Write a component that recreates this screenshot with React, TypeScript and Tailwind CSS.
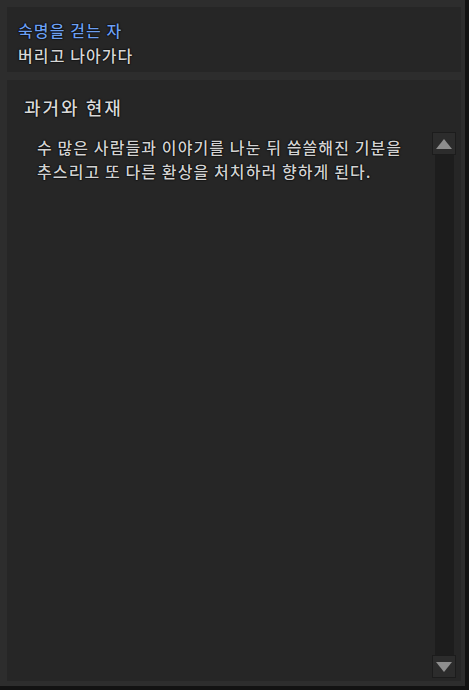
export default function App() {
  const font = { fontFamily: '"Noto Sans CJK KR", "Noto Sans", sans-serif' };

  return (
    <div
      className="w-[469px] h-[690px] bg-[#2d2d2d] border-r-4 border-b-4 border-[#121212] pt-[7px] pl-[7px] pr-[4px] pb-[5px] flex flex-col gap-[8px] [text-shadow:0_0_2px_#000,0_0_1px_#000,0_0_1px_#000]"
      style={font}
    >
      {/* Header */}
      <div className="h-[65px] bg-[#262626] pl-[11px] pt-[11px] shrink-0 font-medium tracking-[1.1px]">
        <div className="text-[16px] leading-[25px] text-[#6d9ff0]">숙명을 걷는 자</div>
        <div className="text-[16px] leading-[25px] text-[#d6d6d6]">버리고 나아가다</div>
      </div>

      {/* Content */}
      <div className="flex-1 bg-[#262626] flex flex-col min-h-0">
        <div className="h-[52px] pl-[17px] pt-[14px] text-[18px] leading-[26px] text-[#d8d8d8] font-medium tracking-[2px] shrink-0">
          과거와 현재
        </div>
        <div className="flex-1 flex min-h-0">
          <div className="flex-1 pl-[30px] pt-[3px] text-[16px] leading-[24px] text-[#d2d2d2] font-medium tracking-[1.1px] whitespace-nowrap">
            수 많은 사람들과 이야기를 나눈 뒤 씁쓸해진 기분을
            <br />
            추스리고 또 다른 환상을 처치하러 향하게 된다.
          </div>

          {/* Scrollbar */}
          <div className="w-[24px] mr-[5px] mb-[3px] flex flex-col items-center">
            <div className="w-[24px] h-[23px] bg-[#2c2c2c] border border-[#1c1c1c] flex items-center justify-center shrink-0">
              <svg width="16" height="10" viewBox="0 0 16 10">
                <polygon points="8,0 16,10 0,10" fill="#8e8e8e" />
              </svg>
            </div>
            <div className="flex-1 w-[19px] bg-[#1d1d1d]" />
            <div className="w-[24px] h-[23px] bg-[#2c2c2c] border border-[#1c1c1c] flex items-center justify-center shrink-0">
              <svg width="16" height="10" viewBox="0 0 16 10">
                <polygon points="0,0 16,0 8,10" fill="#8e8e8e" />
              </svg>
            </div>
          </div>
        </div>
      </div>
    </div>
  );
}
